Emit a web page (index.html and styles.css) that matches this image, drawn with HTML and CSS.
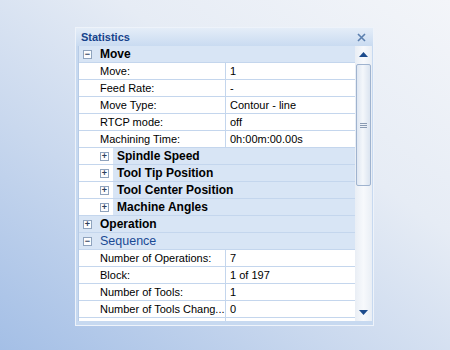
FILE: index.html
```html
<!DOCTYPE html>
<html lang="en">
<head>
  <meta charset="UTF-8">
  <title>Statistics</title>
  <link rel="stylesheet" href="styles.css">
</head>
<body>

<div class="panel">
  <div class="titlebar">
    <span class="title">Statistics</span>
    <svg class="close" width="9" height="9" viewBox="0 0 9 9"><path d="M1 1L8 8M8 1L1 8" stroke="#5b7fae" stroke-width="1.6"/></svg>
  </div>
  <div class="content">
    <div class="grid">
      <div class="row cat"><span class="box">&minus;</span><span class="cat-name">Move</span></div>
      <div class="row"><span class="name">Move:</span><span class="value">1</span></div>
      <div class="row"><span class="name">Feed Rate:</span><span class="value">-</span></div>
      <div class="row"><span class="name">Move Type:</span><span class="value">Contour - line</span></div>
      <div class="row"><span class="name">RTCP mode:</span><span class="value">off</span></div>
      <div class="row"><span class="name">Machining Time:</span><span class="value">0h:00m:00.00s</span></div>
      <div class="row sub"><span class="indent"><span class="box small">+</span></span><span class="cat-name">Spindle Speed</span></div>
      <div class="row sub"><span class="indent"><span class="box small">+</span></span><span class="cat-name">Tool Tip Position</span></div>
      <div class="row sub"><span class="indent"><span class="box small">+</span></span><span class="cat-name">Tool Center Position</span></div>
      <div class="row sub"><span class="indent"><span class="box small">+</span></span><span class="cat-name">Machine Angles</span></div>
      <div class="row cat"><span class="box">+</span><span class="cat-name">Operation</span></div>
      <div class="row cat selected"><span class="box">&minus;</span><span class="cat-name">Sequence</span></div>
      <div class="row"><span class="name">Number of Operations:</span><span class="value">7</span></div>
      <div class="row"><span class="name">Block:</span><span class="value">1 of 197</span></div>
      <div class="row"><span class="name">Number of Tools:</span><span class="value">1</span></div>
      <div class="row"><span class="name">Number of Tools Chang...</span><span class="value">0</span></div>
      <div class="row"><span class="name"></span><span class="value"></span></div>
    </div>
    <div class="scrollbar">
      <div class="arrow"><svg width="9" height="5" viewBox="0 0 9 5"><path d="M0 5L4.5 0L9 5Z" fill="#1c4b8c"/></svg></div>
      <div class="thumb"><span class="grip"></span></div>
      <div class="track"></div>
      <div class="arrow"><svg width="9" height="5" viewBox="0 0 9 5"><path d="M0 0L4.5 5L9 0Z" fill="#1c4b8c"/></svg></div>
    </div>
  </div>
</div>

</body>
</html>
```

FILE: styles.css
```css
body {
  margin: 0;
  height: 350px;
  padding: 27px 0 0 75px;
  box-sizing: border-box;
  font-family: 'Liberation Sans', Arial, sans-serif;
  background: linear-gradient(35deg, #a4bfe6 0%, #c9d8ee 35%, #e6ecf5 65%, #f3f5f9 100%);
}

.panel {
  width: 299px;
  height: 299px;
  box-sizing: border-box;
  border: 1px solid #eef3fa;
  background: #c7d9f0;
  display: flex;
  flex-direction: column;
}

.titlebar {
  height: 18px;
  display: flex;
  align-items: center;
  justify-content: space-between;
  padding: 0 7px 0 5px;
  background: linear-gradient(#e4edf8, #c9dbf1);
}

.title {
  font-size: 11px;
  font-weight: bold;
  color: #15428b;
}

.close {
  display: block;
}

.content {
  display: flex;
  height: 275px;
  margin: 0 1px 0 2px;
}

.grid {
  flex: 1;
  background: #fff;
  border-left: 1px solid #b7cbe6;
  overflow: hidden;
}

.row {
  display: flex;
  height: 16px;
  border-bottom: 1px solid #c4d6ed;
  font-size: 11px;
  line-height: 17px;
  color: #000;
}

.name {
  width: 125px;
  padding-left: 21px;
  border-right: 1px solid #c4d6ed;
  white-space: nowrap;
  overflow: hidden;
}

.value {
  padding-left: 4px;
}

.cat {
  background: #d8e5f5;
  align-items: center;
}

.cat .box {
  margin: 0 8px 0 4px;
}

.cat-name {
  font-size: 12px;
  font-weight: bold;
}

.selected .cat-name {
  font-size: 12.5px;
  font-weight: normal;
  color: #1a4a94;
}

.box {
  width: 7px;
  height: 7px;
  border: 1px solid #8fa3bd;
  background: #fdfdfe;
  font-size: 9px;
  line-height: 7px;
  text-align: center;
  color: #2d3f5c;
  font-weight: bold;
}

.sub {
  background: #d8e5f5;
  align-items: center;
}

.sub .indent {
  width: 34px;
  height: 16px;
  background: #fff;
  display: flex;
  align-items: center;
  margin-right: 4px;
}

.sub .box {
  margin-left: 21px;
}

.scrollbar {
  width: 17px;
  display: flex;
  flex-direction: column;
  background: linear-gradient(90deg, #e9eef5, #f7f9fc 50%, #e9eef5);
}

.arrow {
  height: 17px;
  display: flex;
  align-items: center;
  justify-content: center;
}

.thumb {
  height: 120px;
  margin: 1px 1px 0 1px;
  border: 1px solid #9fb3cf;
  border-radius: 2px;
  background: linear-gradient(90deg, #dfe7f2, #f4f7fb 45%, #dbe4f0);
  display: flex;
  align-items: center;
  justify-content: center;
}

.grip {
  width: 7px;
  height: 5px;
  background: repeating-linear-gradient(#8a9bb3 0 1px, transparent 1px 2px);
}

.track {
  flex: 1;
}
```
